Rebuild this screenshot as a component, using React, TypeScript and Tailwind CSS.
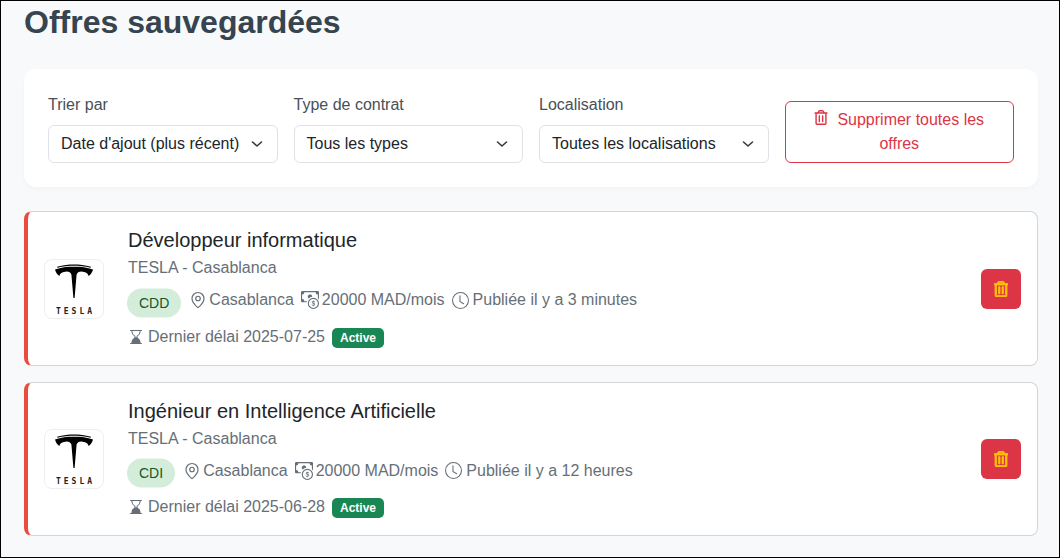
import React from 'react'
import { BsCashCoin, BsClock, BsHourglassBottom } from 'react-icons/bs'
import { FaRegTrashAlt } from 'react-icons/fa'
import { MapPin } from 'lucide-react'

type Offer = {
  title: string
  contract: string
  salary: string
  published: string
  deadline: string
}

const offers: Offer[] = [
  { title: 'Développeur informatique', contract: 'CDD', salary: '20000 MAD/mois', published: 'Publiée il y a 3 minutes', deadline: '2025-07-25' },
  { title: 'Ingénieur en Intelligence Artificielle', contract: 'CDI', salary: '20000 MAD/mois', published: 'Publiée il y a 12 heures', deadline: '2025-06-28' },
]

const filters = [
  { label: 'Trier par', value: "Date d'ajout (plus récent)" },
  { label: 'Type de contrat', value: 'Tous les types' },
  { label: 'Localisation', value: 'Toutes les localisations' },
]

const Chevron = () => (
  <svg width="16" height="16" viewBox="0 0 16 16" fill="none" stroke="#343a40" strokeWidth="1.6" strokeLinecap="round" strokeLinejoin="round" className="shrink-0">
    <path d="M3.5 6l4.5 4 4.5-4" />
  </svg>
)

const TeslaLogo = () => (
  <div className="w-[60px] h-[60px] shrink-0 bg-white border border-[#eeeeee] rounded-lg flex flex-col items-center overflow-hidden">
    <svg width="38" height="35" viewBox="0 0 38 35" className="mt-[4px] shrink-0">
      <path d="M2 2.8C8 1 14 .4 19 .4s11 .6 17 2.4l-.5 1C30 2.4 24 1.8 19 1.8S8 2.4 2.5 3.8z" fill="#000" />
      <path d="M0 5.5C6 3.2 12 2.7 19 2.7s13 .5 19 2.8C37.4 8.4 35.4 11 33.5 12 33 9 30 8 26.4 7.6 23.8 7.6 22.4 8.6 21.6 10.5L19.6 34H18.4L16.4 10.5C15.6 8.6 14.2 7.6 11.6 7.6 8 8 5 9 4.5 12 2.6 11 .6 8.4 0 5.5z" fill="#000" />
    </svg>
    <span className="mt-[8px] text-[8px] leading-[10px] font-bold tracking-[3px] pl-[3px] text-[#222] font-['DejaVu_Sans_Mono',monospace]">TESLA</span>
  </div>
)

const OfferCard = ({ offer }: { offer: Offer }) => (
  <div className="flex items-center h-[154.5px] bg-white border border-[#d3d5d8] border-l-[4px] border-l-[#e74c3c] rounded-lg pl-[16px] pr-[16px]">
    <TeslaLogo />
    <div className="flex-1 ml-[24px] min-w-0">
      <h3 className="text-[20px] leading-[24px] text-[#212529]">{offer.title}</h3>
      <p className="mt-[4px] text-[16px] leading-[24px] text-[#666f77]">TESLA - Casablanca</p>
      <div className="mt-[5.5px] flex items-center text-[16px] text-[#666f77] ml-[-1px]">
        <span className="h-[29px] px-[12px] flex items-center rounded-full bg-[#d4edda] text-[#155724] text-[14px] translate-y-[2.5px]">{offer.contract}</span>
        <MapPin strokeWidth={1.6} className="ml-[8px] w-[18px] h-[18px] shrink-0" />
        <span className="ml-[2px]">Casablanca</span>
        <BsCashCoin className="ml-[7px] w-[18px] h-[18px] shrink-0" />
        <span className="ml-[3px]">{offer.salary}</span>
        <BsClock className="ml-[7px] w-[17px] h-[17px] shrink-0" />
        <span className="ml-[4px]">{offer.published}</span>
      </div>
      <div className="mt-[10px] flex items-center text-[16px] text-[#666f77] h-[24px]">
        <BsHourglassBottom className="w-[16px] h-[16px] shrink-0" />
        <span className="ml-[4px]">Dernier délai {offer.deadline}</span>
        <span className="ml-[7px] h-[20px] px-[8px] flex items-center rounded-[5px] bg-[#198754] text-white text-[12px] font-bold translate-y-[1px]">Active</span>
      </div>
    </div>
    <button className="w-[40px] h-[40px] rounded-md bg-[#dc3545] flex items-center justify-center">
      <FaRegTrashAlt strokeWidth={24} className="w-[14px] h-[16px] text-[#ffc107]" />
    </button>
  </div>
)

const App = () => {
  return (
    <div className="w-[1060px] h-[558px] overflow-hidden border border-black bg-[#f8f9fa] px-[23px] font-['Liberation_Sans',Arial,sans-serif]">
      <h1 className="h-[68px] pt-[1px] text-[32px] leading-[40px] font-bold text-[#364450]">Offres sauvegardées</h1>
      <div className="w-[1014px] h-[118px] bg-white rounded-[12px] shadow-[0_2px_4px_rgba(0,0,0,0.03)] px-[24px] pt-[24px] grid grid-cols-4 gap-x-[16px]">
        {filters.map((f) => (
          <div key={f.label}>
            <label className="block h-[32px] text-[16px] leading-[24px] text-[#495057]">{f.label}</label>
            <div className="h-[38px] flex items-center justify-between pl-[12px] pr-[12px] bg-white border border-[#dee2e6] rounded-md text-[16px] text-[#212529] whitespace-nowrap">
              <span>{f.value}</span>
              <Chevron />
            </div>
          </div>
        ))}
        <button className="mt-[8px] h-[62px] border border-[#dc3545] rounded-md text-[16px] leading-[24px] text-[#dc3545] px-[12px] text-center">
          <FaRegTrashAlt className="inline-block w-[14px] h-[15px] mr-[9px] align-[0px]" />
          Supprimer toutes les offres
        </button>
      </div>
      <div className="mt-[24.4px] w-[1014px] flex flex-col gap-[16px]">
        {offers.map((o) => (
          <OfferCard key={o.title} offer={o} />
        ))}
      </div>
    </div>
  )
}

export default App
